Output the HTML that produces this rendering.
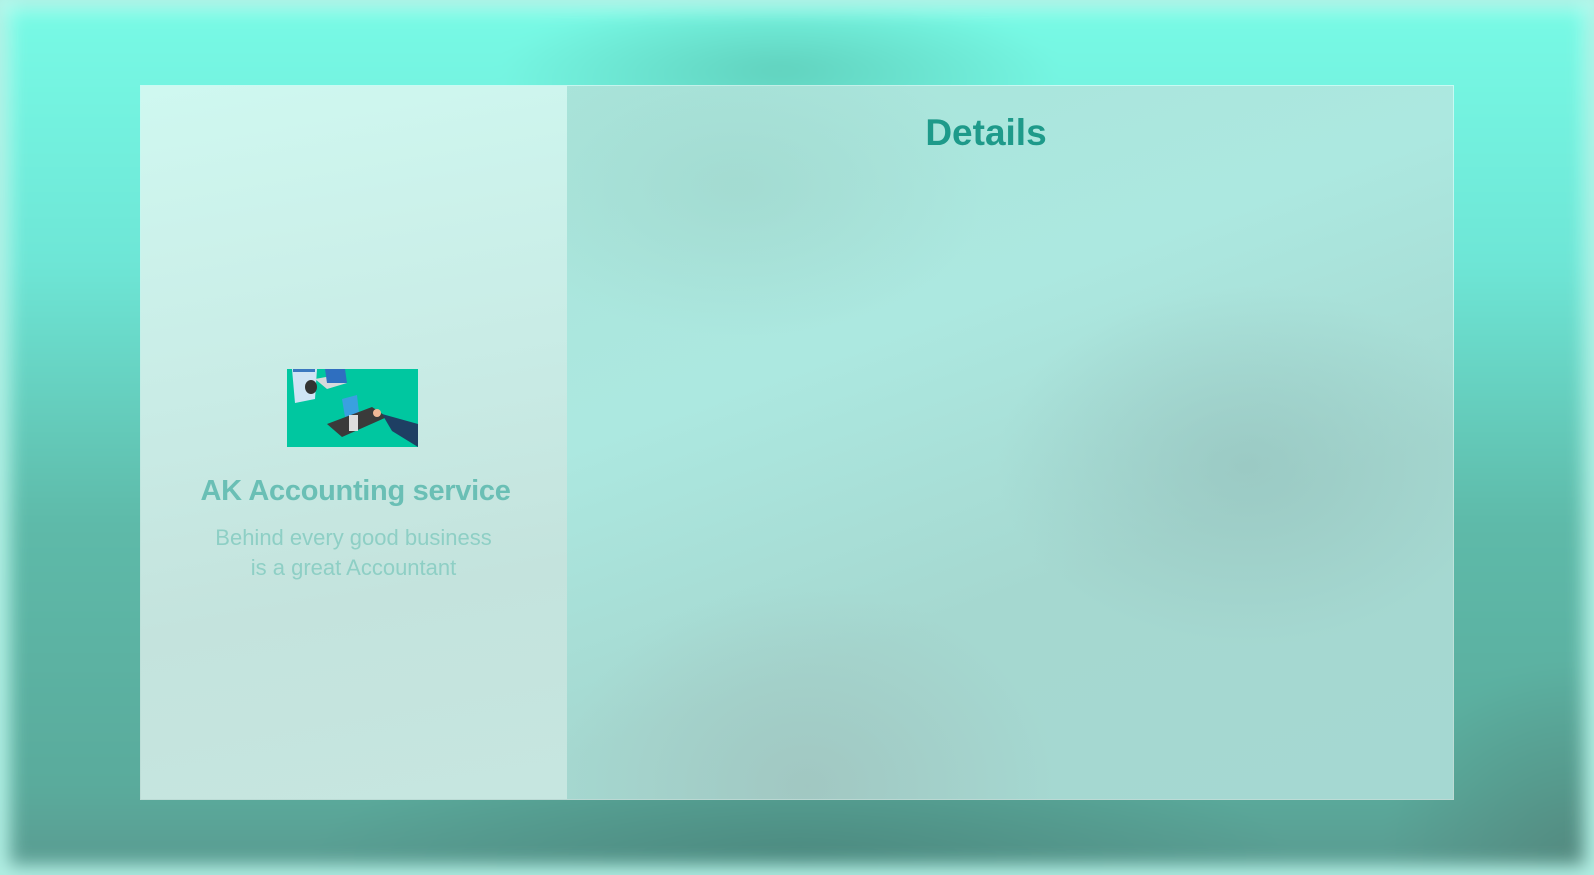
<!DOCTYPE html>
<html><head><meta charset="utf-8">
<style>
html,body{margin:0;padding:0;width:1594px;height:875px;overflow:hidden;font-family:"Liberation Sans",sans-serif;}
.bg{position:absolute;inset:0;background:#5fb8a8;}
.bg::before{content:"";position:absolute;inset:0;
background:
radial-gradient(ellipse 280px 80px at 780px 70px, rgba(80,180,160,0.55), transparent 100%),
radial-gradient(ellipse 500px 120px at 800px 860px, rgba(70,130,120,0.7), transparent 100%),
radial-gradient(ellipse 200px 200px at 1580px 860px, rgba(80,130,120,0.7), transparent 100%),
linear-gradient(180deg,#78fbe6 0%,#6ee6d6 30%,#5ebaa9 60%,#5aab9c 90%,#5a9a90 100%);
filter:blur(8px);}
.edge{position:absolute;inset:0;box-shadow:inset 0 0 18px 10px rgba(200,255,245,0.8);}
.card{position:absolute;left:140px;top:85px;width:1314px;height:715px;border:1px solid rgba(255,255,255,0.6);box-sizing:border-box;overflow:hidden;}
.left{position:absolute;left:0;top:0;width:426px;height:100%;
background:linear-gradient(170deg,#cff8f0 0%,#c9ece6 40%,#c4e3dd 70%,#c6e6e0 100%);}
.right{position:absolute;left:426px;top:0;right:0;height:100%;
background:
radial-gradient(ellipse 250px 180px at 680px 380px, rgba(150,195,190,0.7), transparent 100%),
radial-gradient(ellipse 250px 200px at 240px 700px, rgba(160,195,190,0.8), transparent 100%),
radial-gradient(ellipse 250px 150px at 170px 100px, rgba(160,215,205,0.7), transparent 100%),
linear-gradient(160deg,#a9e4da 0%,#ace8e0 35%,#a5d8d0 65%,#a5d8d2 100%);}
.details{position:absolute;left:567px;width:838px;top:112px;text-align:center;font-weight:bold;font-size:37px;color:#1e9a8a;}
.logo{position:absolute;left:287px;top:369px;width:131px;height:78px;background:#00c7a0;overflow:hidden;}
.t1{position:absolute;left:142px;width:427px;top:475px;text-align:center;font-weight:bold;font-size:29px;color:#6abfb5;letter-spacing:-0.3px;}
.t2{position:absolute;left:140px;width:427px;top:523px;text-align:center;font-size:22px;line-height:30px;color:#8ecfc5;}
</style></head><body>
<div class="bg"></div><div class="edge"></div>
<div class="card"><div class="left"></div><div class="right"></div></div>
<div class="details">Details</div>
<div class="logo">
<svg width="131" height="78" viewBox="0 0 131 78">
<rect width="131" height="78" fill="#00c7a0"/>
<polygon points="5,0 30,0 28,30 8,34" fill="#cfe4f5"/>
<rect x="6" y="0" width="22" height="3" fill="#3a78c0"/>
<ellipse cx="24" cy="18" rx="6" ry="7" fill="#333"/>
<polygon points="28,10 50,6 60,14 40,20" fill="#d7dadb"/>
<polygon points="38,0 58,0 60,14 40,14" fill="#2f6fc0"/>
<polygon points="55,30 70,26 72,44 58,48" fill="#3aa0e0"/>
<polygon points="40,55 85,38 100,48 55,68" fill="#3a3a3a"/>
<rect x="62" y="46" width="9" height="16" fill="#ddd"/>
<polygon points="95,45 131,55 131,78 105,62" fill="#1e3f63"/>
<circle cx="90" cy="44" r="4" fill="#f0b896"/>
</svg></div>
<div class="t1">AK Accounting service</div>
<div class="t2">Behind every good business<br>is a great Accountant</div>
</body></html>
